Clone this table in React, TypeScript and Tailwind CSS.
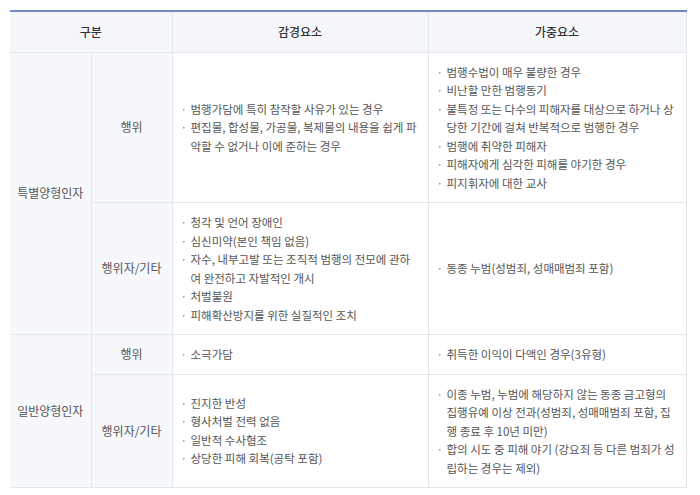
const font = { fontFamily: '"Noto Sans CJK KR", "Noto Sans", sans-serif' };

type Row = {
  group?: string;
  groupSpan?: number;
  kind: string;
  minus: string[][];
  plus: string[][];
};

const rows: Row[] = [
  {
    group: "특별양형인자",
    groupSpan: 2,
    kind: "행위",
    minus: [
      ["범행가담에 특히 참작할 사유가 있는 경우"],
      ["편집물, 합성물, 가공물, 복제물의 내용을 쉽게 파", "악할 수 없거나 이에 준하는 경우"],
    ],
    plus: [
      ["범행수법이 매우 불량한 경우"],
      ["비난할 만한 범행동기"],
      ["불특정 또는 다수의 피해자를 대상으로 하거나 상", "당한 기간에 걸쳐 반복적으로 범행한 경우"],
      ["범행에 취약한 피해자"],
      ["피해자에게 심각한 피해를 야기한 경우"],
      ["피지휘자에 대한 교사"],
    ],
  },
  {
    kind: "행위자/기타",
    minus: [
      ["청각 및 언어 장애인"],
      ["심신미약(본인 책임 없음)"],
      ["자수, 내부고발 또는 조직적 범행의 전모에 관하", "여 완전하고 자발적인 개시"],
      ["처벌불원"],
      ["피해확산방지를 위한 실질적인 조치"],
    ],
    plus: [["동종 누범(성범죄, 성매매범죄 포함)"]],
  },
  {
    group: "일반양형인자",
    groupSpan: 2,
    kind: "행위",
    minus: [["소극가담"]],
    plus: [["취득한 이익이 다액인 경우(3유형)"]],
  },
  {
    kind: "행위자/기타",
    minus: [
      ["진지한 반성"],
      ["형사처벌 전력 없음"],
      ["일반적 수사협조"],
      ["상당한 피해 회복(공탁 포함)"],
    ],
    plus: [
      ["이종 누범, 누범에 해당하지 않는 동종 금고형의", "집행유예 이상 전과(성범죄, 성매매범죄 포함, 집", "행 종료 후 10년 미만)"],
      ["합의 시도 중 피해 야기 (강요죄 등 다른 범죄가 성", "립하는 경우는 제외)"],
    ],
  },
];

const Items = ({ items }: { items: string[][] }) => (
  <ul className="flex flex-col">
    {items.map((lines, i) => (
      <li key={i} className="flex">
        <span className="w-[10px] shrink-0 text-[#888]">·</span>
        <span className="flex flex-col whitespace-nowrap">
          {lines.map((l, j) => (
            <span key={j}>{l}</span>
          ))}
        </span>
      </li>
    ))}
  </ul>
);

export default function App() {
  return (
    <div className="bg-white w-[700px] h-[495px] pt-[10px] pl-[10px]" style={font}>
      <table className="w-[676px] border-collapse table-fixed text-[11.5px] leading-[18.5px] text-[#555] border-t-2 border-t-[#7388c5]">
        <colgroup>
          <col className="w-[81px]" />
          <col className="w-[81px]" />
          <col className="w-[256px]" />
          <col className="w-[258px]" />
        </colgroup>
        <thead>
          <tr className="h-[41px] bg-[#f5f6fa] text-[#333] text-[12px]">
            <th colSpan={2} className="border-r border-b border-[#e4e7ec] font-medium">구분</th>
            <th className="border-r border-b border-[#e4e7ec] font-medium">감경요소</th>
            <th className="border-r border-b border-[#e4e7ec] font-medium">가중요소</th>
          </tr>
        </thead>
        <tbody>
          {rows.map((r, i) => (
            <tr key={i}>
              {r.group && (
                <td
                  rowSpan={r.groupSpan}
                  className="bg-[#f7f8fb] border-r border-b border-[#e4e7ec] text-center align-middle text-[12px]"
                >
                  {r.group}
                </td>
              )}
              <td className="bg-[#f7f8fb] border-r border-b border-[#e4e7ec] text-center align-middle text-[12px]">
                {r.kind}
              </td>
              <td className="border-r border-b border-[#e4e7ec] align-middle px-[8px] py-[10px]">
                <Items items={r.minus} />
              </td>
              <td className="border-r border-b border-[#e4e7ec] align-middle px-[8px] py-[10px]">
                <Items items={r.plus} />
              </td>
            </tr>
          ))}
        </tbody>
      </table>
    </div>
  );
}
